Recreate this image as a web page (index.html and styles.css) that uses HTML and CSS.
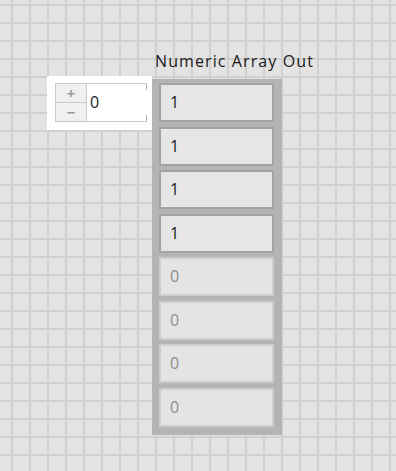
FILE: index.html
```html
<!DOCTYPE html>
<html lang="en">
<head>
  <meta charset="UTF-8">
  <title>Numeric Array Out</title>
  <link rel="stylesheet" href="styles.css">
</head>
<body>
  <main class="panel">
    <div class="control">
      <div class="spin">
        <span class="spin-btn">+</span>
        <span class="spin-btn">&minus;</span>
      </div>
      <div class="field">0</div>
    </div>

    <div class="array">
      <div class="array-label">Numeric Array Out</div>
      <div class="array-frame">
        <div class="cell">1</div>
        <div class="cell">1</div>
        <div class="cell">1</div>
        <div class="cell">1</div>
        <div class="cell empty">0</div>
        <div class="cell empty">0</div>
        <div class="cell empty">0</div>
        <div class="cell empty">0</div>
      </div>
    </div>
  </main>
</body>
</html>
```

FILE: styles.css
```css
html, body {
  margin: 0;
  height: 100%;
}
body {
  font-family: 'Open Sans', 'Noto Sans', sans-serif;
  background-color: #e3e3e3;
  background-image:
    linear-gradient(to right, #d0d0d0 2px, transparent 2px),
    linear-gradient(to bottom, #d0d0d0 2px, transparent 2px);
  background-size: 18px 18px;
  background-position: 11px 4px;
}
.panel {
  display: flex;
  align-items: flex-start;
  padding: 52px 0 0 47px;
}
.control {
  display: flex;
  margin-top: 24px;
  width: 105px;
  height: 54px;
  box-sizing: border-box;
  padding: 7px 5px 0 8px;
  background: #fff;
}
.spin {
  display: flex;
  flex-direction: column;
  width: 32px;
  height: 39px;
  box-sizing: border-box;
  border: 1px solid #c9c9c9;
  background: #f0f0f0;
}
.spin-btn {
  flex: 1;
  display: flex;
  align-items: center;
  justify-content: center;
  color: #9a9a9a;
  font-size: 15px;
  font-weight: bold;
  line-height: 1;
}
.spin-btn + .spin-btn {
  border-top: 1px solid #c9c9c9;
}
.field {
  flex: 1;
  height: 39px;
  box-sizing: border-box;
  border-top: 1px solid #c9c9c9;
  border-bottom: 1px solid #c9c9c9;
  padding-left: 3px;
  font-size: 16px;
  line-height: 37px;
  color: #1a1a1a;
  background:
    linear-gradient(#b5b5b5, #b5b5b5) right top / 1px 6px no-repeat,
    linear-gradient(#b5b5b5, #b5b5b5) right bottom / 1px 6px no-repeat,
    #fff;
}
.array {
  display: flex;
  flex-direction: column;
}
.array-label {
  padding-left: 3px;
  height: 27px;
  font-size: 16px;
  letter-spacing: 1.1px;
  line-height: 19px;
  color: #1a1a1a;
  white-space: nowrap;
}
.array-frame {
  display: flex;
  flex-direction: column;
  gap: 4.57px;
  width: 130px;
  box-sizing: border-box;
  padding: 4px 8px 8px 7px;
  background: #b4b4b4;
}
.cell {
  height: 39px;
  box-sizing: border-box;
  border: 2px solid #a3a3a3;
  background: #e6e6e6;
  padding-left: 9px;
  font-size: 16px;
  line-height: 35px;
  color: #1a1a1a;
}
.cell.empty {
  border-color: #cdcdcd;
  background: #e4e4e4;
  color: #8c8c8c;
}
```
